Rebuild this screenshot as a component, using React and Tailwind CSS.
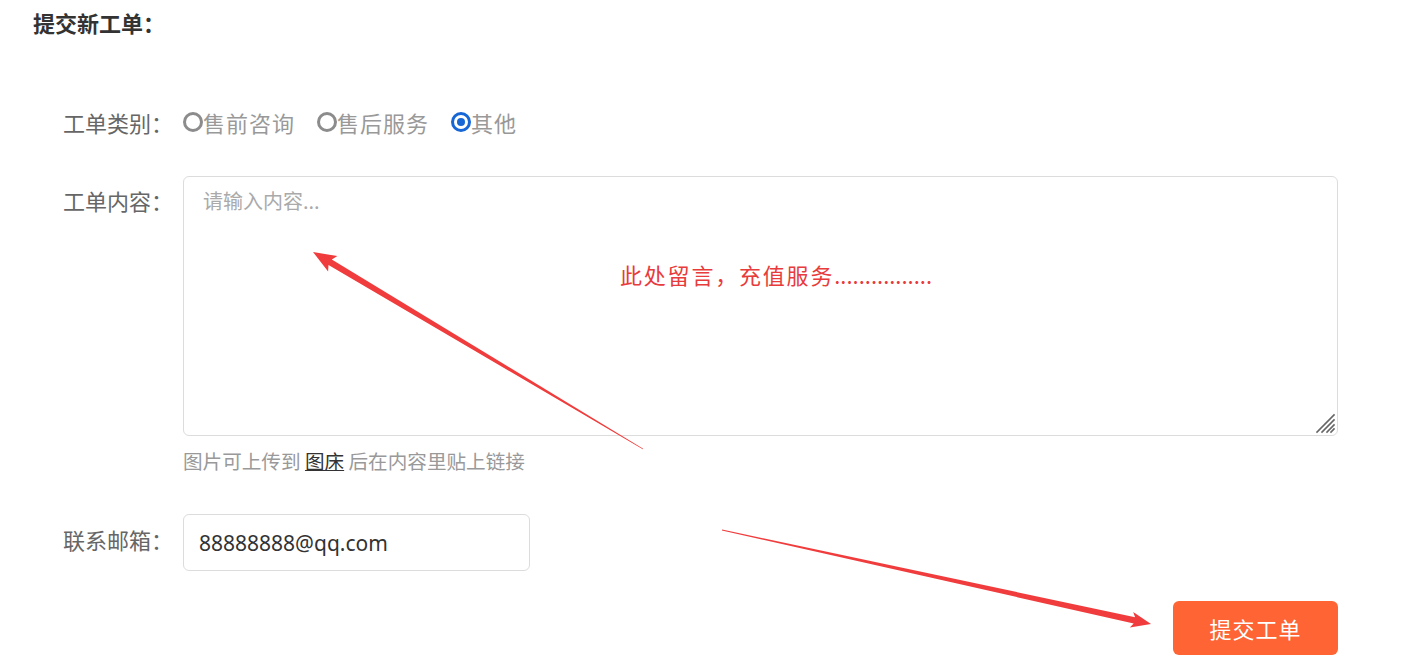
import React, { useState } from "react";

const FONT = { fontFamily: '"Noto Sans CJK SC", "Noto Sans", sans-serif' };

// build a tapered arrow polygon from tail to tip
const arrowPoints = (tx, ty, hx, hy, tailW, shaftW, headLen, headW) => {
  const dx = hx - tx;
  const dy = hy - ty;
  const len = Math.hypot(dx, dy);
  const ux = dx / len;
  const uy = dy / len;
  const nx = -uy;
  const ny = ux;
  const bx = hx - ux * headLen;
  const by = hy - uy * headLen;
  const pts = [
    [tx + nx * tailW, ty + ny * tailW],
    [bx + nx * shaftW, by + ny * shaftW],
    [bx + nx * headW - ux * 3, by + ny * headW - uy * 3],
    [hx, hy],
    [bx - nx * headW - ux * 3, by - ny * headW - uy * 3],
    [bx - nx * shaftW, by - ny * shaftW],
    [tx - nx * tailW, ty - ny * tailW],
  ];
  return pts.map((p) => p.map((v) => v.toFixed(1)).join(",")).join(" ");
};

const Radio = ({ label, checked, onClick }) => (
  <button type="button" onClick={onClick} className="flex items-center cursor-pointer">
    {checked ? (
      <span className="w-[20px] h-[20px] rounded-full border-[3px] border-[#1766d6] flex items-center justify-center">
        <span className="w-[8px] h-[8px] rounded-full bg-[#1766d6]" />
      </span>
    ) : (
      <span className="w-[20px] h-[20px] rounded-full border-[3px] border-[#8c8c8c]" />
    )}
    <span className="text-[22px] leading-[30px] text-[#999] tracking-[1px]">{label}</span>
  </button>
);

export default function App() {
  const [type, setType] = useState("other");
  const [email, setEmail] = useState("88888888@qq.com");

  return (
    <div className="relative min-h-[666px] bg-white" style={FONT}>
      <h2 className="pl-[33px] pt-[7px] text-[22px] leading-[30px] font-bold text-[#333]">提交新工单：</h2>

      <form className="pl-[63px] pr-[84px] mt-[70px] flex flex-col" onSubmit={(e) => e.preventDefault()}>
        <div className="flex items-center">
          <label className="w-[120px] shrink-0 text-[22px] leading-[30px] text-[#666]">工单类别：</label>
          <div className="flex items-center gap-[22px]">
            <Radio label="售前咨询" checked={type === "pre"} onClick={() => setType("pre")} />
            <Radio label="售后服务" checked={type === "after"} onClick={() => setType("after")} />
            <Radio label="其他" checked={type === "other"} onClick={() => setType("other")} />
          </div>
        </div>

        <div className="flex mt-[39px]">
          <label className="w-[120px] shrink-0 pt-[9px] text-[22px] leading-[30px] text-[#666]">工单内容：</label>
          <div className="flex-1 flex flex-col">
            <div className="relative">
              <textarea
                placeholder="请输入内容..."
                className="block w-full h-[260px] resize-none rounded-[6px] border border-[#dcdcdc] px-[19px] py-[9px] text-[20px] leading-[30px] text-[#333] placeholder:text-[#aaa] outline-none"
              />
              <svg className="absolute right-[2px] bottom-[2px]" width="22" height="22" viewBox="0 0 22 22">
                <g stroke="#666" strokeWidth="1.6" strokeLinecap="square">
                  <line x1="3" y1="20" x2="20" y2="3" />
                  <line x1="8" y1="20" x2="20" y2="8" />
                  <line x1="13" y1="20" x2="20" y2="13" />
                  <line x1="17" y1="20" x2="20" y2="17" />
                </g>
              </svg>
            </div>
            <p className="mt-[12px] text-[19.6px] leading-[26px] text-[#999]">
              图片可上传到 <a href="#" className="text-[#333] underline">图床</a> 后在内容里贴上链接
            </p>
          </div>
        </div>

        <div className="flex items-center mt-[40px]">
          <label className="w-[120px] shrink-0 pb-[7px] text-[22px] leading-[30px] text-[#666]">联系邮箱：</label>
          <input
            value={email}
            onChange={(e) => setEmail(e.target.value)}
            className="w-[347px] h-[57px] rounded-[6px] border border-[#dcdcdc] px-[15px] text-[21px] text-[#333] outline-none"
            style={{ fontFamily: '"Noto Sans", sans-serif' }}
          />
        </div>

        <div className="flex justify-end mt-[30px]">
          <button type="submit" className="w-[165px] h-[54px] rounded-[6px] bg-[#fe6434] text-white text-[22px] tracking-[1px]">
            提交工单
          </button>
        </div>
      </form>

      {/* annotation overlay */}
      <p className="absolute left-[620px] top-[257px] text-[22px] leading-[34px] text-[#e83b3b]">
        <span className="tracking-[1.8px]">此处留言，充值服务</span>
        <span>................</span>
      </p>
      <svg className="absolute inset-0 pointer-events-none" width="1422" height="666">
        <polygon points={arrowPoints(643, 449, 313, 252, 0.4, 3.2, 20, 9)} fill="#f03c3c" />
        <polygon points={arrowPoints(722, 530, 1151, 624, 0.4, 3.2, 17, 8)} fill="#f03c3c" />
      </svg>
    </div>
  );
}
